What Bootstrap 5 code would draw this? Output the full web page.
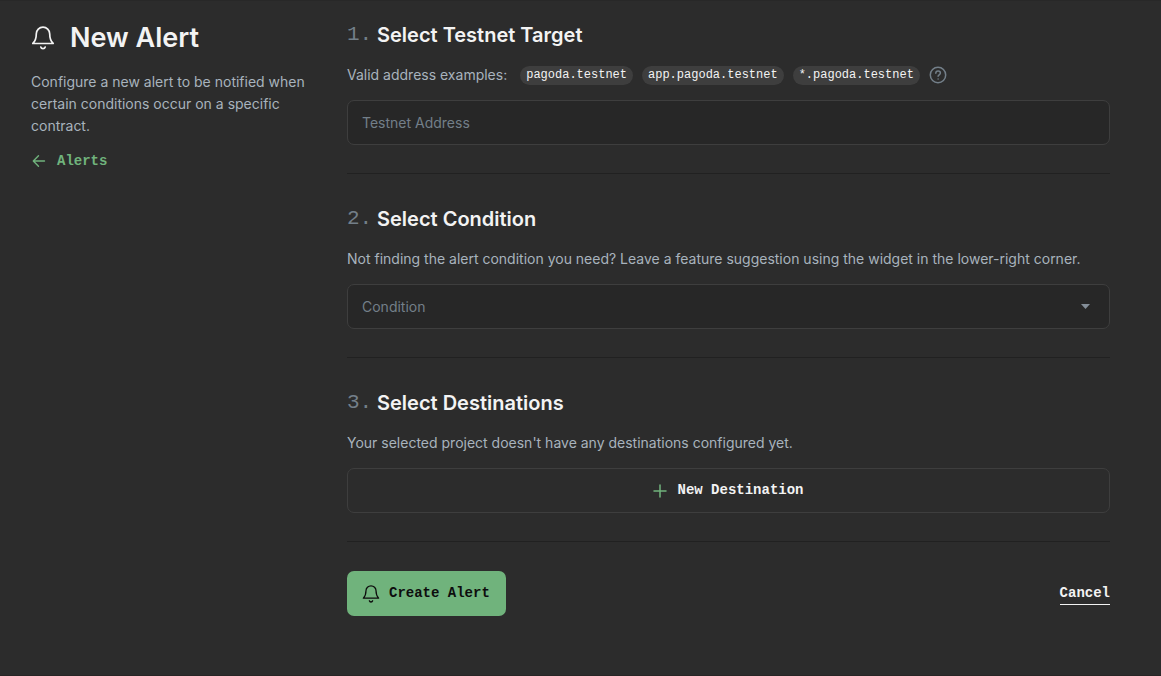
<!DOCTYPE html>
<html lang="en">
<head>
<meta charset="utf-8">
<meta name="viewport" content="width=device-width, initial-scale=1">
<title>New Alert</title>
<link href="https://cdn.jsdelivr.net/npm/bootstrap@5.3.0/dist/css/bootstrap.min.css" rel="stylesheet">
<style>
  :root { --ink: #f3f3f3; --soft: #a8b3bd; --dim: #737f89; --line: #3e3e3e; --green: #70b37c; }
  body { background: #2c2c2c; color: var(--soft); font: 14px/22px Inter, "Liberation Sans", sans-serif; min-height: 100vh; border-top: 1px solid #282828; border-bottom: 1px solid #282525; }
  .alert-page { padding: 18px 51px 32px 31px; gap: 28px; }
  .side { flex: 0 0 288px; }
  .mono { font-family: "Liberation Mono", monospace; font-weight: 700; }
  h1 { font-size: 27px; line-height: 38px; font-weight: 600; color: var(--ink); gap: 15px; margin-bottom: 14px; }
  .intro { margin-bottom: 13px; }
  h2 { font-size: 20px; line-height: 32px; font-weight: 600; color: var(--ink); margin-bottom: 13px; }
  h2 .num { font-family: "Liberation Mono", monospace; font-weight: 400; font-size: 21px; color: var(--dim); width: 30px; }
  .hint { min-height: 22px; margin-bottom: 14px; }
  .examples { column-gap: 9px; }
  .examples-label { margin-right: 4px; }
  .back { color: var(--green); gap: 10px; }
  .pill { font: 12px/19px "Liberation Mono", monospace; color: var(--ink); background: #3e3e3e; padding: 0 6px; border-radius: 10px; }
  .help { color: var(--dim); }
  .field, .field:focus { height: 45px; background-color: #272727; border: 1px solid var(--line); border-radius: 7px; color: var(--dim); font-size: 14px; padding: 0 14px; }
  .field::placeholder { color: var(--dim); opacity: 1; }
  select.field { background-image: url("data:image/svg+xml,%3Csvg xmlns='http://www.w3.org/2000/svg' viewBox='0 0 9 5'%3E%3Cpath d='M0 0h9L4.500 5z' fill='%23848e98'/%3E%3C/svg%3E"); background-size: 9px 5px; background-position: right 19px center; }
  .rule { height: 1px; margin: 28px 0 29px; background: #212121; opacity: 1; border: 0; }
  .btn { height: 45px; border-radius: 7px; font-size: 14px; }
  .btn-new, .btn-new:hover { border: 1px solid var(--line); color: var(--ink); gap: 10px; }
  .btn-create, .btn-create:hover { background: var(--green); color: #0d0d0d; border: 0; padding: 0 16px 0 15px; gap: 9px; }
  .cancel { color: var(--ink); border-bottom: 1px solid var(--ink); }
  @media (max-width: 767px) { .side { flex-basis: auto; } }
</style>
</head>
<body>
<svg class="d-none" xmlns="http://www.w3.org/2000/svg">
  <symbol id="bell" viewBox="0 0 24 24"><path d="M1.800 17.500C4 15.500 5.300 13 5.300 7.800a6.700 6.700 0 0 1 13.400 0c0 5.200 1.300 7.700 3.500 9.700zM9.800 21c.6 2.200 3.800 2.200 4.400 0" fill="none" stroke="currentColor" stroke-width="1.700" stroke-linecap="round" stroke-linejoin="round"/></symbol>
</svg>
<div class="alert-page d-flex flex-column flex-md-row">
  <aside class="side">
    <h1 class="d-flex align-items-center"><svg width="24" height="24" aria-hidden="true"><use href="#bell"/></svg>New Alert</h1>
    <p class="intro">Configure a new alert to be notified when certain conditions occur on a specific contract.</p>
    <a href="#" class="back mono d-flex align-items-center text-decoration-none"><svg width="16" height="16" viewBox="0 0 16 16" fill="none" stroke="currentColor" stroke-width="1.400" stroke-linecap="round" stroke-linejoin="round" aria-hidden="true"><path d="M13.500 8H2.500M7.500 2.800L2.300 8l5.200 5.200"/></svg>Alerts</a>
  </aside>
  <main class="flex-grow-1">
    <form>
      <section>
        <h2 class="d-flex"><span class="num">1.</span><label for="address">Select Testnet Target</label></h2>
        <div class="hint examples d-flex flex-wrap align-items-center">
          <span class="examples-label">Valid address examples:</span>
          <span class="pill">pagoda.testnet</span><span class="pill">app.pagoda.testnet</span><span class="pill">*.pagoda.testnet</span>
          <svg class="help" width="18" height="18" viewBox="0 0 18 18" fill="none" stroke="currentColor" stroke-width="1.500" stroke-linecap="round" role="img" aria-label="Help"><circle cx="9" cy="9" r="7.700"/><path d="M6.800 7.200c0-2.900 4.600-2.800 4.600-.1 0 1.600-2.300 1.700-2.300 3.100M9.100 12.900v.1"/></svg>
        </div>
        <input id="address" type="text" class="form-control field" placeholder="Testnet Address">
      </section>
      <hr class="rule">
      <section>
        <h2 class="d-flex"><span class="num">2.</span><label for="condition">Select Condition</label></h2>
        <p class="hint">Not finding the alert condition you need? Leave a feature suggestion using the widget in the lower-right corner.</p>
        <select id="condition" class="form-select field"><option>Condition</option></select>
      </section>
      <hr class="rule">
      <section>
        <h2 class="d-flex"><span class="num">3.</span><span>Select Destinations</span></h2>
        <p class="hint">Your selected project doesn't have any destinations configured yet.</p>
        <button type="button" class="btn btn-new mono w-100 d-flex align-items-center justify-content-center"><svg width="14" height="14" viewBox="0 0 14 14" fill="none" stroke="#70b37c" stroke-width="1.500" stroke-linecap="round" aria-hidden="true"><path d="M7 1v12M1 7h12"/></svg>New Destination</button>
      </section>
      <hr class="rule">
      <div class="d-flex align-items-center justify-content-between">
        <button type="submit" class="btn btn-create mono d-flex align-items-center"><svg width="18" height="18" aria-hidden="true"><use href="#bell"/></svg>Create Alert</button>
        <a href="#" class="cancel mono text-decoration-none">Cancel</a>
      </div>
    </form>
  </main>
</div>
<script src="https://cdn.jsdelivr.net/npm/bootstrap@5.3.0/dist/js/bootstrap.bundle.min.js"></script>
</body>
</html>
